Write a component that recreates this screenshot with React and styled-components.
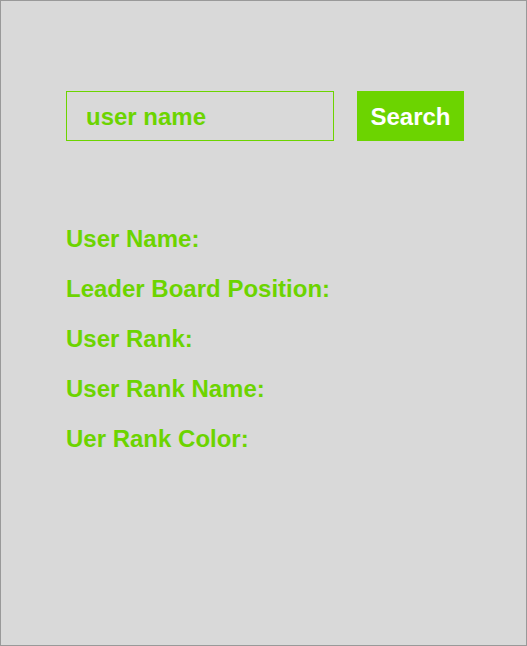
import React from "react";
import styled, { createGlobalStyle } from "styled-components";

const GlobalStyle = createGlobalStyle`
  html, body {
    margin: 0;
    padding: 0;
  }
  body {
    font-family: "Liberation Sans", Arial, sans-serif;
  }
`;

const Frame = styled.div`
  box-sizing: border-box;
  width: 527px;
  height: 646px;
  background-color: #d9d9d9;
  border: 1px solid #999999;
  padding: 90px 0 0 65px;
  display: flex;
  flex-direction: column;
`;

const SearchRow = styled.div`
  display: flex;
  align-items: stretch;
  gap: 23px;
  height: 50px;
`;

const NameInput = styled.input`
  box-sizing: border-box;
  width: 268px;
  height: 50px;
  border: 1px solid #6cd400;
  background: transparent;
  padding: 2px 0 0 19px;
  font-family: "Liberation Sans", Arial, sans-serif;
  font-weight: bold;
  font-size: 24px;
  color: #6cd400;
  outline: none;

  &::placeholder {
    color: #6cd400;
    opacity: 1;
  }
`;

const SearchButton = styled.button`
  box-sizing: border-box;
  width: 107px;
  height: 50px;
  border: none;
  background-color: #6cd400;
  color: #ffffff;
  font-family: "Liberation Sans", Arial, sans-serif;
  font-weight: bold;
  font-size: 24px;
  cursor: pointer;
  padding: 2px 0 0;
`;

const Details = styled.div`
  display: flex;
  flex-direction: column;
  margin-top: 73px;
`;

const Label = styled.div`
  height: 50px;
  line-height: 50px;
  font-size: 24px;
  font-weight: bold;
  color: #6cd400;
`;

const fields = [
  "User Name:",
  "Leader Board Position:",
  "User Rank:",
  "User Rank Name:",
  "Uer Rank Color:",
];

const App = () => {
  return (
    <>
      <GlobalStyle />
      <Frame>
        <SearchRow>
          <NameInput placeholder="user name" />
          <SearchButton>Search</SearchButton>
        </SearchRow>
        <Details>
          {fields.map((f) => (
            <Label key={f}>{f}</Label>
          ))}
        </Details>
      </Frame>
    </>
  );
};

export default App;
